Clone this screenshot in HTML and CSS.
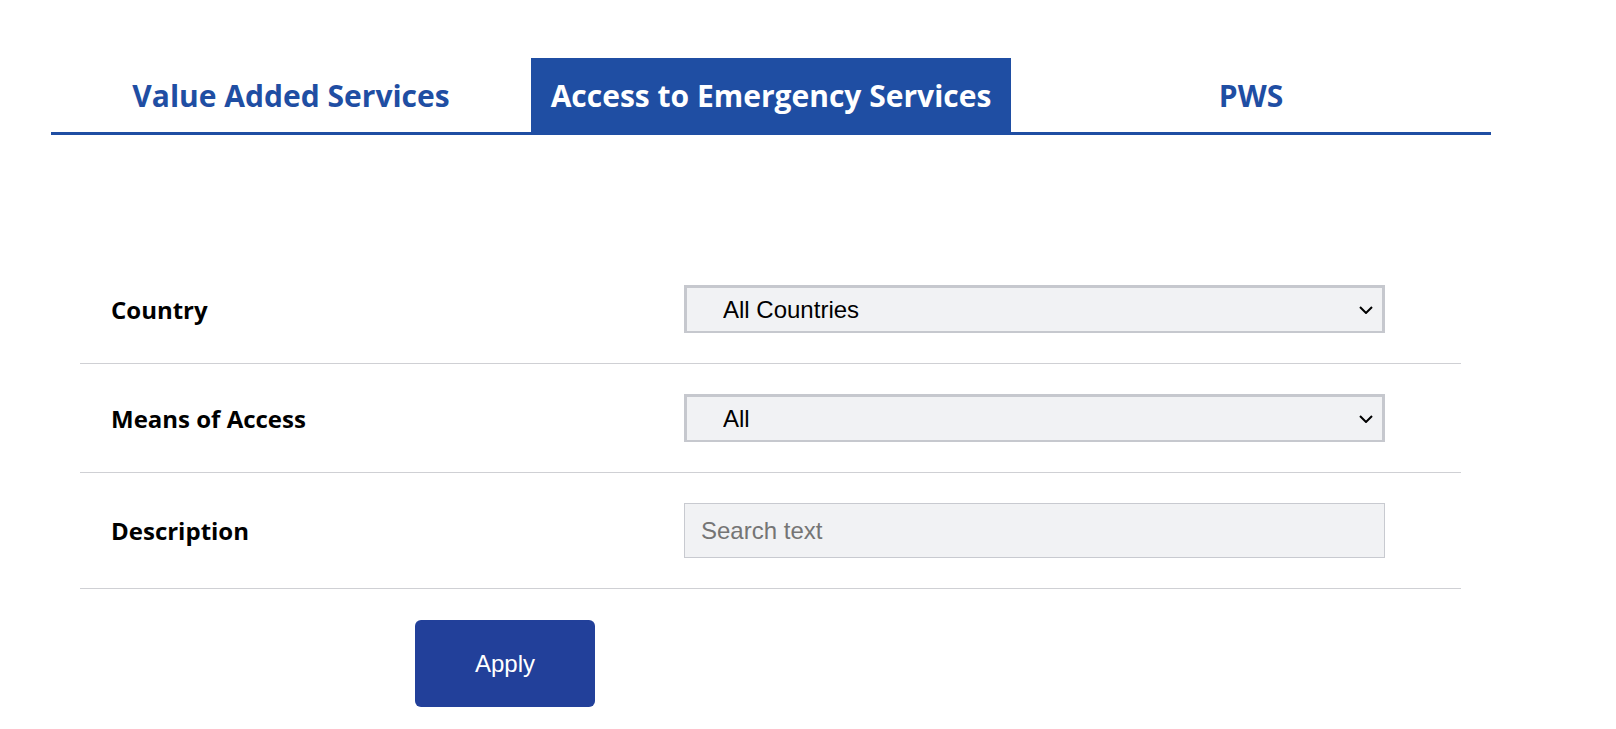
FILE: index.html
```html
<!DOCTYPE html>
<html lang="en">
<head>
    <meta charset="UTF-8">
    <meta name="viewport" content="width=device-width, initial-scale=1.0">
    <title>Services</title>
    <link rel="stylesheet" href="styles.css">
</head>
<body>

    <div class="tabs">
        <div class="tab">Value Added Services</div>
        <div class="tab active">Access to Emergency Services</div>
        <div class="tab">PWS</div>
    </div>

    <form class="filters" id="filtroForm">
        <div class="row">
            <label for="pais">Country</label>
            <select id="pais">
                <option>All Countries</option>
            </select>
        </div>
        <div class="row">
            <label for="meio">Means of Access</label>
            <select id="meio">
                <option>All</option>
            </select>
        </div>
        <div class="row">
            <label for="descricao">Description</label>
            <input type="text" id="descricao" placeholder="Search text">
        </div>
        <button type="submit" class="apply">Apply</button>
    </form>

</body>
</html>
```

FILE: styles.css
```css
/* Abas e filtros */
body {
    font-family: "Open Sans", sans-serif;
    margin: 0;
    padding: 0;
    background: #fff;
}

.tabs {
    display: flex;
    width: 1440px;
    margin: 58px 0 0 51px;
    border-bottom: 3px solid #1f4ea3;
}

.tab {
    flex: 1;
    height: 74px;
    display: flex;
    align-items: center;
    justify-content: center;
    font-size: 30px;
    font-weight: 700;
    color: #1f4ea3;
}

.tab.active {
    background: #1f4ea3;
    color: #fff;
}

.filters {
    width: 1381px;
    margin: 120px 0 0 80px;
}

.row {
    display: grid;
    grid-template-columns: 573px 701px;
    align-items: center;
    padding: 30px 0 30px 31px;
    border-bottom: 1px solid #cfd0d4;
}

.row label {
    font-size: 24px;
    font-weight: 700;
    color: #000;
}

.row select {
    appearance: none;
    -webkit-appearance: none;
    height: 48px;
    margin: 0;
    padding: 0 0 0 36px;
    border-style: solid;
    border-color: #c6c8ce;
    border-width: 3px 3px 2px 3px;
    border-radius: 0;
    background: #f1f2f4 url("data:image/svg+xml;utf8,<svg xmlns='http://www.w3.org/2000/svg' width='14' height='8' viewBox='0 0 14 8'><path d='M1 1l6 6 6-6' fill='none' stroke='black' stroke-width='2'/></svg>") no-repeat right 9px center;
    font-family: "Liberation Sans", Arial, sans-serif;
    font-size: 24px;
    color: #000;
}

.row input {
    height: 55px;
    box-sizing: border-box;
    margin: 0;
    padding: 0 16px;
    border: 1px solid #c8cad0;
    border-radius: 0;
    background: #f1f2f4;
    font-family: "Liberation Sans", Arial, sans-serif;
    font-size: 24px;
    color: #000;
}

.row input::placeholder {
    color: #757575;
}

.apply {
    display: block;
    width: 180px;
    height: 87px;
    margin: 31px 0 0 335px;
    border: none;
    border-radius: 6px;
    background: #22409a;
    color: #fff;
    font-family: "Liberation Sans", Arial, sans-serif;
    font-size: 24px;
}
```
